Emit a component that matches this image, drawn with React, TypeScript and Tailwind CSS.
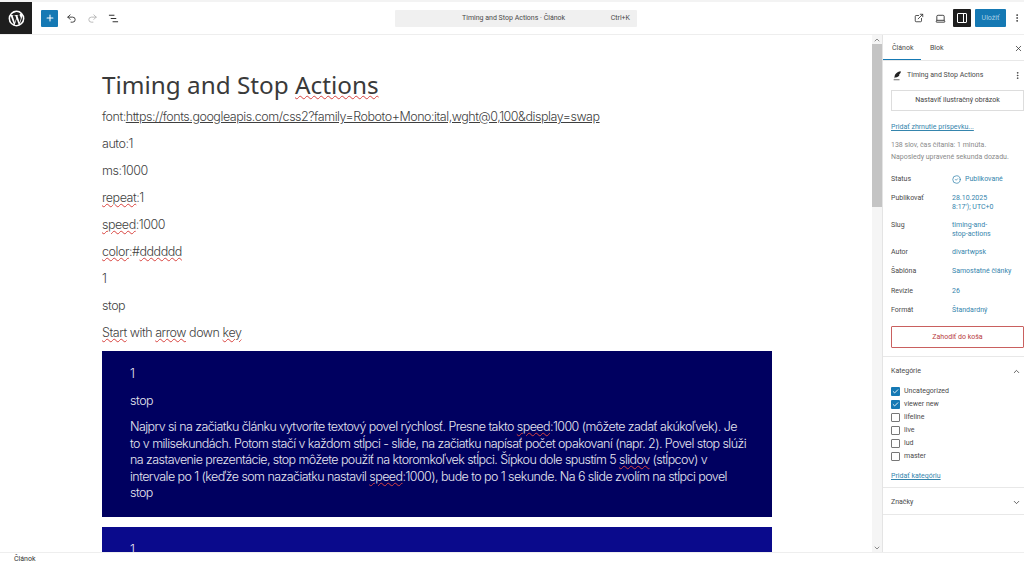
import React from 'react';
import { Undo2, Redo2, ExternalLink, Laptop, MoreVertical, X, ChevronUp, ChevronDown, Check, Plus, CircleCheck } from 'lucide-react';

const Spell = ({ children }: { children: React.ReactNode }) => (
  <span className="underline decoration-wavy decoration-[#d8433f] decoration-1 underline-offset-1">{children}</span>
);

const Row = ({ label, tall, children }: { label: string; tall?: boolean; children: React.ReactNode }) => (
  <div className={tall ? 'flex text-[7px] leading-[9px] h-[17px]' : 'flex text-[7px] leading-[9px]'}>
    <div className="w-[61px] shrink-0 text-[#4a4a4a]">{label}</div>
    <div className="text-[#3585ad]">{children}</div>
  </div>
);

const Cat = ({ name, on }: { name: string; on?: boolean }) => (
  <div className="flex items-center gap-[4px] h-[13px]">
    {on ? (
      <span className="w-[9px] h-[9px] rounded-[1px] bg-[#1579b4] flex items-center justify-center"><Check size={7} strokeWidth={3} className="text-white" /></span>
    ) : (
      <span className="w-[9px] h-[9px] rounded-[1px] border border-[#777] bg-white" />
    )}
    <span className="text-[7px] text-[#4a4a4a]">{name}</span>
  </div>
);

export default function App() {
  return (
    <div className="w-[1024px] h-[562px] overflow-hidden flex flex-col bg-white font-['Roboto',sans-serif]">
      <div className="h-[2px] bg-[#f3f3f3]" />

      {/* top bar */}
      <header className="h-[33px] shrink-0 flex items-center border-b border-[#eeeeee] text-[#2b2b2b]">
        <div className="w-[32px] h-[32px] bg-[#1e1e1e] flex items-center justify-center">
          <svg viewBox="0 0 28 28" className="w-[17px] h-[17px]" fill="none">
            <circle cx="14" cy="14" r="13" fill="#fff" />
            <path d="M3.5 14c0 4.2 2.4 7.8 6 9.5L4.5 9.7A10.4 10.4 0 0 0 3.5 14zm17.5-.5c0-1.300-.5-2.200-.9-2.900-.5-.9-1-1.600-1-2.500 0-1 .8-1.900 1.800-1.900h.1A10.500 10.500 0 0 0 5.100 8.300h.7c1.100 0 2.800-.1 2.800-.1.600 0 .6.800.1.900 0 0-.6.100-1.200.1l3.800 11.300 2.300-6.900-1.600-4.400c-.6 0-1.100-.1-1.100-.1-.6 0-.5-.9 0-.9 0 0 1.700.1 2.800.1 1.100 0 2.800-.1 2.800-.1.600 0 .6.800.1.900 0 0-.6.100-1.200.1l3.800 11.200 1-3.500c.5-1.400.8-2.400.8-3.300zM14.200 15l-3.100 9.100a10.500 10.500 0 0 0 6.500-.2l-.1-.1L14.200 15zm9-6c0 .2.100.7.100 1.100 0 1-.2 2.200-.8 3.700l-3.200 9.200A10.500 10.500 0 0 0 23.200 9z" fill="#1e1e1e" />
          </svg>
        </div>
        <button className="ml-[9px] w-[17px] h-[17px] bg-[#1579b4] rounded-[1px] flex items-center justify-center"><Plus size={10} strokeWidth={2.5} className="text-white" /></button>
        <Undo2 size={11} className="ml-[8px] text-[#333]" />
        <Redo2 size={11} className="ml-[10px] text-[#b5b5b5]" />
        <svg viewBox="0 0 12 12" className="ml-[10px] w-[11px] h-[11px]" stroke="#333" strokeWidth="1.200" fill="none">
          <path d="M1 2.500h6M3 6h6M5 9.500h6" />
        </svg>
        <div className="ml-[276px] w-[242px] h-[17px] bg-[#f0f0f0] rounded-[1px] flex items-center text-[7px] text-[#4a4a4a]">
          <span className="ml-[67px]">Timing and Stop Actions · Článok</span>
          <span className="ml-auto mr-[7px]">Ctrl+K</span>
        </div>
        <ExternalLink size={10} className="ml-[277px] text-[#333]" />
        <Laptop size={11} className="ml-[11px] text-[#333]" />
        <div className="ml-[7px] w-[18px] h-[18px] bg-[#1e1e1e] rounded-[1px] flex items-center justify-center">
          <div className="w-[10px] h-[10px] border border-white rounded-[1px] flex justify-end"><div className="w-[3px] border-l border-white" /></div>
        </div>
        <button className="ml-[4px] w-[31px] h-[18px] bg-[#1579b4] rounded-[1px] text-[7px] text-[#a9d0e6]">Uložiť</button>
        <MoreVertical size={10} className="ml-[6px] text-[#333]" />
      </header>

      <div className="flex-1 min-h-0 flex">
        {/* editor canvas */}
        <main className="w-[872px] shrink-0 overflow-hidden pl-[102px] pt-[34px] text-[#3f3f3f] font-['Inter',sans-serif] font-light text-[12.5px] tracking-[-0.46px] leading-[18px]">
          <h1 className="font-['Noto_Sans',sans-serif] font-normal tracking-normal text-[24.3px] leading-[32px] text-[#3a3a3a]">Timing and Stop <Spell>Actions</Spell></h1>
          <div className="w-[670px] mt-[7px] flex flex-col gap-[9px]">
            <p>font:<span className="underline">https://fonts.googleapis.com/css2?family=Roboto+Mono:ital,wght@0,100&amp;display=swap</span></p>
            <p>auto:1</p>
            <p>ms:1000</p>
            <p><Spell>repeat</Spell>:1</p>
            <p><Spell>speed</Spell>:1000</p>
            <p><Spell>color</Spell>:#<Spell>dddddd</Spell></p>
            <p>1</p>
            <p>stop</p>
            <p><Spell>Start</Spell> with <Spell>arrow</Spell> down <Spell>key</Spell></p>
          </div>
          <div className="w-[670px] mt-[9px] h-[166px] bg-[#000060] text-[#e6e6f0] pl-[28px] pt-[14px] flex flex-col gap-[9px]">
            <p>1</p>
            <p>stop</p>
            <p className="leading-[16.5px] tracking-[-0.57px] whitespace-nowrap">Najprv si na začiatku článku vytvoríte textový povel rýchlosť. Presne takto <Spell>speed</Spell>:1000 (môžete zadať akúkoľvek). Je<br />to v milisekundách. Potom stačí v každom stĺpci - slide, na začiatku napísať počet opakovaní (napr. 2). Povel stop slúži<br />na zastavenie prezentácie, stop môžete použiť na ktoromkoľvek stĺpci. Šípkou dole spustím 5 <Spell>slidov</Spell> (stĺpcov) v<br />intervale po 1 (keďže som nazačiatku nastavil <Spell>speed</Spell>:1000), bude to po 1 sekunde. Na 6 slide zvolím na stĺpci povel<br />stop</p>
          </div>
          <div className="w-[670px] mt-[10px] h-[60px] bg-[#0a0a8c] text-[#e6e6f0] pl-[28px] pt-[14px]">1</div>
        </main>

        {/* scrollbar */}
        <div className="w-[10px] shrink-0 bg-[#f5f5f5] flex flex-col items-center">
          <ChevronUp size={8} className="mt-[1px] text-[#555]" />
          <div className="w-full h-[163px] bg-[#c4c4c4]" />
          <ChevronDown size={8} className="mt-auto text-[#555]" />
        </div>

        {/* settings sidebar */}
        <aside className="flex-1 border-l border-[#e4e4e4] text-[#4a4a4a]">
          <div className="h-[26px] flex items-center border-b border-[#e8e8e8] text-[7px] pt-[2px]">
            <div className="w-[38px] h-full pl-[9px] flex items-center border-b border-[#1579b4]">Článok</div>
            <div className="ml-[9px]">Blok</div>
            <X size={9} className="ml-auto mr-[1px] text-[#333]" />
          </div>
          <div className="pl-[8px] pt-[9px] border-b border-[#e8e8e8] h-[296px]">
            <div className="flex items-center h-[11px] text-[7px]">
              <svg viewBox="0 0 12 12" className="ml-[1px] w-[10px] h-[11px]" fill="#222">
                <path d="M3 8.500C3 5 5.500 1.500 10.500 1c.3 2-1 3.300-2.300 3.600l1 .4C8 7.500 5.500 8.500 4 8.200L3.500 9.500z" />
                <path d="M2 10.800h7v.8H2z" />
              </svg>
              <span className="ml-[5px]">Timing and Stop Actions</span>
              <MoreVertical size={9} className="ml-auto mr-[2px] text-[#333]" />
            </div>
            <button className="mt-[9px] w-full h-[21px] border border-[#ddd] text-[7px] text-[#444]">Nastaviť ilustračný obrázok</button>
            <div className="mt-[12px] text-[7px] leading-[9px] text-[#3585ad] underline">Pridať zhrnutie príspevku...</div>
            <div className="mt-[7px] text-[7px] leading-[12px] text-[#8a8a8a]">138 slov, čas čítania: 1 minúta.<br />Naposledy upravené sekunda dozadu.</div>
            <div className="mt-[12px] flex flex-col gap-[10px]">
              <Row label="Status"><span className="flex items-center gap-[4px]"><CircleCheck size={9} />Publikované</span></Row>
              <Row label="Publikovať" tall>28.10.2025<br />8:17'); UTC+0</Row>
              <Row label="Slug" tall>timing-and-<br />stop-actions</Row>
              <Row label="Autor">divartwpsk</Row>
              <div className="pb-[1px]"><Row label="Šablóna">Samostatné články</Row></div>
              <Row label="Revízie">26</Row>
              <Row label="Formát">Štandardný</Row>
            </div>
            <button className="mt-[11px] w-full h-[22px] border border-[#c9605f] rounded-[1px] text-[7px] text-[#b8403f]">Zahodiť do koša</button>
          </div>
          <div className="pl-[8px] pt-[10px] pr-[3px] h-[131px] border-b border-[#e8e8e8]">
            <div className="flex items-center justify-between h-[9px] text-[7px]">Kategórie<ChevronUp size={9} className="text-[#333]" /></div>
            <div className="mt-[9px]">
              <Cat name="Uncategorized" on />
              <Cat name="viewer new" on />
              <Cat name="lifeline" />
              <Cat name="live" />
              <Cat name="lud" />
              <Cat name="master" />
            </div>
            <div className="mt-[9px] text-[7px] leading-[9px] text-[#3585ad] underline">Pridať kategóriu</div>
          </div>
          <div className="pl-[8px] pr-[3px] pt-[3px] h-[27px] flex items-center justify-between border-b border-[#e8e8e8] text-[7px]">Značky<ChevronDown size={9} className="text-[#333]" /></div>
        </aside>
      </div>

      {/* status bar */}
      <footer className="h-[10px] shrink-0 overflow-hidden border-t border-[#eeeeee] pl-[14px] pt-[2px] text-[7px] leading-[8px] text-[#333] bg-white">Článok</footer>
    </div>
  );
}
